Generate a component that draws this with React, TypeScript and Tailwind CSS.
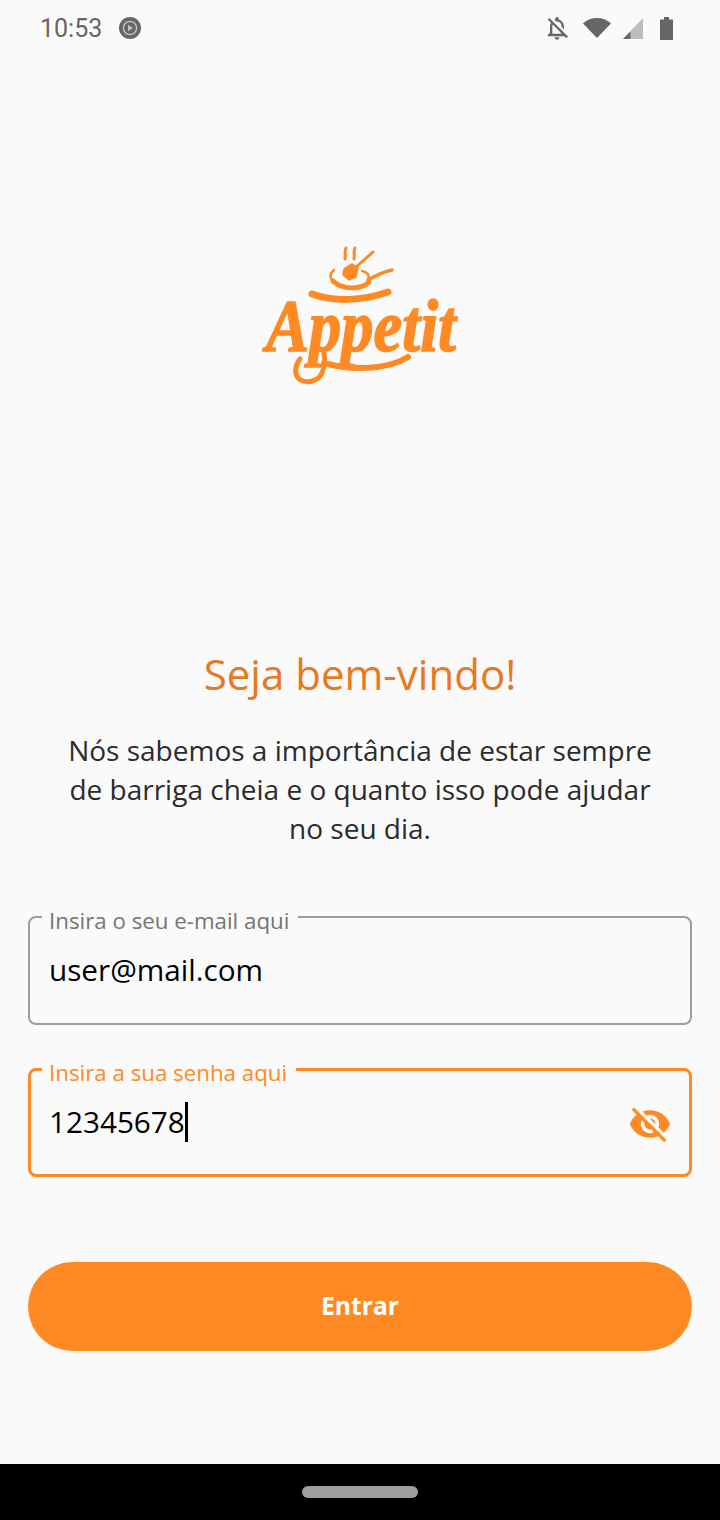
import type { ReactNode } from "react";

const MDI = {
  bellOff:
    "M12 22c1.1 0 2-.9 2-2h-4c0 1.1.9 2 2 2zm0-15.5c2.49 0 4 2.02 4 4.5v.1l2 2V11c0-3.07-1.63-5.64-4.5-6.32V4c0-.83-.67-1.5-1.5-1.5s-1.5.67-1.5 1.5v.68c-.24.06-.47.15-.69.23l1.64 1.64c.18-.02.36-.05.55-.05zM5.41 3.35L4 4.76l2.81 2.81C6.29 8.57 6 9.74 6 11v5l-2 2v1h14.24l1.74 1.74 1.41-1.41L5.41 3.35zM16 17H8v-6c0-.68.12-1.32.34-1.9L16 16.76V17z",
  eyeOff:
    "M12 7c2.76 0 5 2.24 5 5 0 .65-.13 1.26-.36 1.83l2.92 2.92c1.51-1.26 2.7-2.89 3.43-4.75-1.73-4.39-6-7.5-11-7.5-1.4 0-2.74.25-3.98.7l2.16 2.16C10.74 7.13 11.35 7 12 7zM2 4.27l2.28 2.28.46.46C3.08 8.3 1.78 10.02 1 12c1.73 4.39 6 7.5 11 7.5 1.55 0 3.03-.3 4.38-.84l.42.42L19.73 22 21 20.73 3.27 3 2 4.27zM7.53 9.8l1.55 1.55c-.05.21-.08.43-.08.65 0 1.66 1.34 3 3 3 .22 0 .44-.03.65-.08l1.55 1.55c-.67.33-1.41.53-2.2.53-2.76 0-5-2.24-5-5 0-.79.2-1.53.53-2.2zm4.31-.78l3.15 3.15.02-.16c0-1.66-1.34-3-3-3l-.17.01z",
};

function StatusBar() {
  return (
    <div className="flex h-14 items-center justify-between pl-10 pr-[47px] text-[#666666]">
      <div className="flex items-center gap-[17px]">
        <span className="font-['Roboto',sans-serif] text-[25px] font-normal leading-none">10:53</span>
        <svg viewBox="0 0 22 22" className="h-[22px] w-[22px]">
          <circle cx="11" cy="11" r="11" fill="#666666" />
          <circle cx="11" cy="11" r="6.6" fill="none" stroke="#c4c4c4" strokeWidth="1.4" />
          <path d="M9 7.8v6.4l5-3.2z" fill="#c4c4c4" />
        </svg>
      </div>
      <div className="flex items-center">
        <svg viewBox="0 0 24 24" className="mr-[12px] h-7 w-7" fill="#666666">
          <path d={MDI.bellOff} />
        </svg>
        <svg viewBox="0 0 28 20" className="mr-[12px] h-5 w-7" fill="#666666">
          <path d="M0 5.5C3.6 2 8.5 0 14 0s10.4 2 14 5.5L14 20z" />
        </svg>
        <svg viewBox="0 0 20 21" className="mr-[17px] h-[21px] w-5">
          <path d="M20 0v21H0z" fill="#bdbdbd" />
          <path d="M7.5 13.5V21H0z" fill="#666666" />
        </svg>
        <svg viewBox="0 0 13 23" className="h-[23px] w-[13px]" fill="#666666">
          <path d="M4 0h5v2.5h4V23H0V2.5h4z" />
        </svg>
      </div>
    </div>
  );
}

function Logo() {
  return (
    <svg viewBox="0 0 196 140" className="mx-auto h-[140px] w-[196px] overflow-visible" fill="none" stroke="#ff8a24" strokeLinecap="round">
      {/* steam */}
      <path d="M84 3c-2 3 0 6-1 11M93 3c-2 3 0 6-1 11" strokeWidth="3" />
      {/* spatula */}
      <path d="M111 7L94 22" strokeWidth="3" />
      <path d="M82 24l8-5 6 4-2 9-7 3-6-5z" fill="#ff8a24" strokeWidth="1.5" />
      {/* pan */}
      <path d="M72 25c-4 3-5 7-1 11" strokeWidth="2.4" />
      <path d="M100 26c5 1 8 4 6 8" strokeWidth="2.4" />
      <path d="M71 36c9 9 28 9 36 1" strokeWidth="5" />
      <path d="M106 35c7-4 14-8 24-10" strokeWidth="3.5" />
      {/* top swash */}
      <path d="M50 49c22 8 50 7 76-2" strokeWidth="7" />
      {/* wordmark */}
      <text
        x="4"
        y="106"
        textLength="190"
        lengthAdjust="spacingAndGlyphs"
        fill="#ff8a24"
        stroke="#ff8a24"
        strokeWidth="1.6"
        fontFamily="'Liberation Serif', serif"
        fontStyle="italic"
        fontWeight="700"
        fontSize="74"
      >
        Appetit
      </text>
      {/* bottom swash */}
      <path d="M38 114c-5 6-6 15-1 20 7 5 19 3 23-6 3-7 3-14 2-20" strokeWidth="5" />
      <path d="M62 118c24 7 62 8 84-6" strokeWidth="6" />
    </svg>
  );
}

function Field({
  label,
  focused,
  children,
}: {
  label: string;
  focused?: boolean;
  children: ReactNode;
}) {
  return (
    <fieldset
      className={`h-[124px] rounded-[8px] ${focused ? "border-[3px] border-[#ff8a24]" : "border-2 border-[#9e9e9e]"}`}
    >
      <legend
        className={`pl-[7px] pr-[9px] pt-[8px] text-[22.3px] leading-[24px] ${focused ? "ml-[11px] text-[#ff8a24]" : "ml-[12px] text-[#757575]"}`}
      >
        {label}
      </legend>
      <div className={`flex items-center ${focused ? "h-[89px] pb-[15px] pl-[18px] pr-[17px]" : "h-[90px] pb-[16px] pl-[19px] pr-[19px]"}`}>
        {children}
      </div>
    </fieldset>
  );
}

export default function App() {
  return (
    <div className="flex h-[1520px] w-[720px] flex-col bg-[#fafafa] font-['Open_Sans',sans-serif]">
      <StatusBar />
      <main className="flex-1 px-7">
        <div className="mt-[189px]">
          <Logo />
        </div>
        <h1 className="mt-[262px] text-center text-[42px] font-normal leading-[54px] text-[#e8791f]">Seja bem-vindo!</h1>
        <p className="mx-auto mt-[30px] w-[600px] text-center text-[28px] leading-[39px] text-[#2b2b2b]">
          Nós sabemos a importância de estar sempre de barriga cheia e o quanto isso pode ajudar no seu dia.
        </p>
        <div className="mt-[53px] flex flex-col gap-[28px]">
          <Field label="Insira o seu e-mail aqui">
            <span className="text-[29.7px] leading-[40px] text-black">user@mail.com</span>
          </Field>
          <Field label="Insira a sua senha aqui" focused>
            <span className="text-[29.7px] leading-[40px] text-black">12345678</span>
            <span className="h-10 w-[3px] bg-black" />
            <svg viewBox="0 0 24 24" className="ml-auto mt-[3px] h-[44px] w-[44px]" fill="#ff8a24">
              <path d={MDI.eyeOff} />
            </svg>
          </Field>
        </div>
        <button className="mt-[85px] flex h-[89px] w-full items-center justify-center rounded-full bg-[#ff8a24] text-[24.6px] font-bold text-white">
          Entrar
        </button>
      </main>
      <div className="flex h-14 items-center justify-center bg-black">
        <div className="h-3 w-[116px] rounded-full bg-[#9e9e9e]" />
      </div>
    </div>
  );
}
